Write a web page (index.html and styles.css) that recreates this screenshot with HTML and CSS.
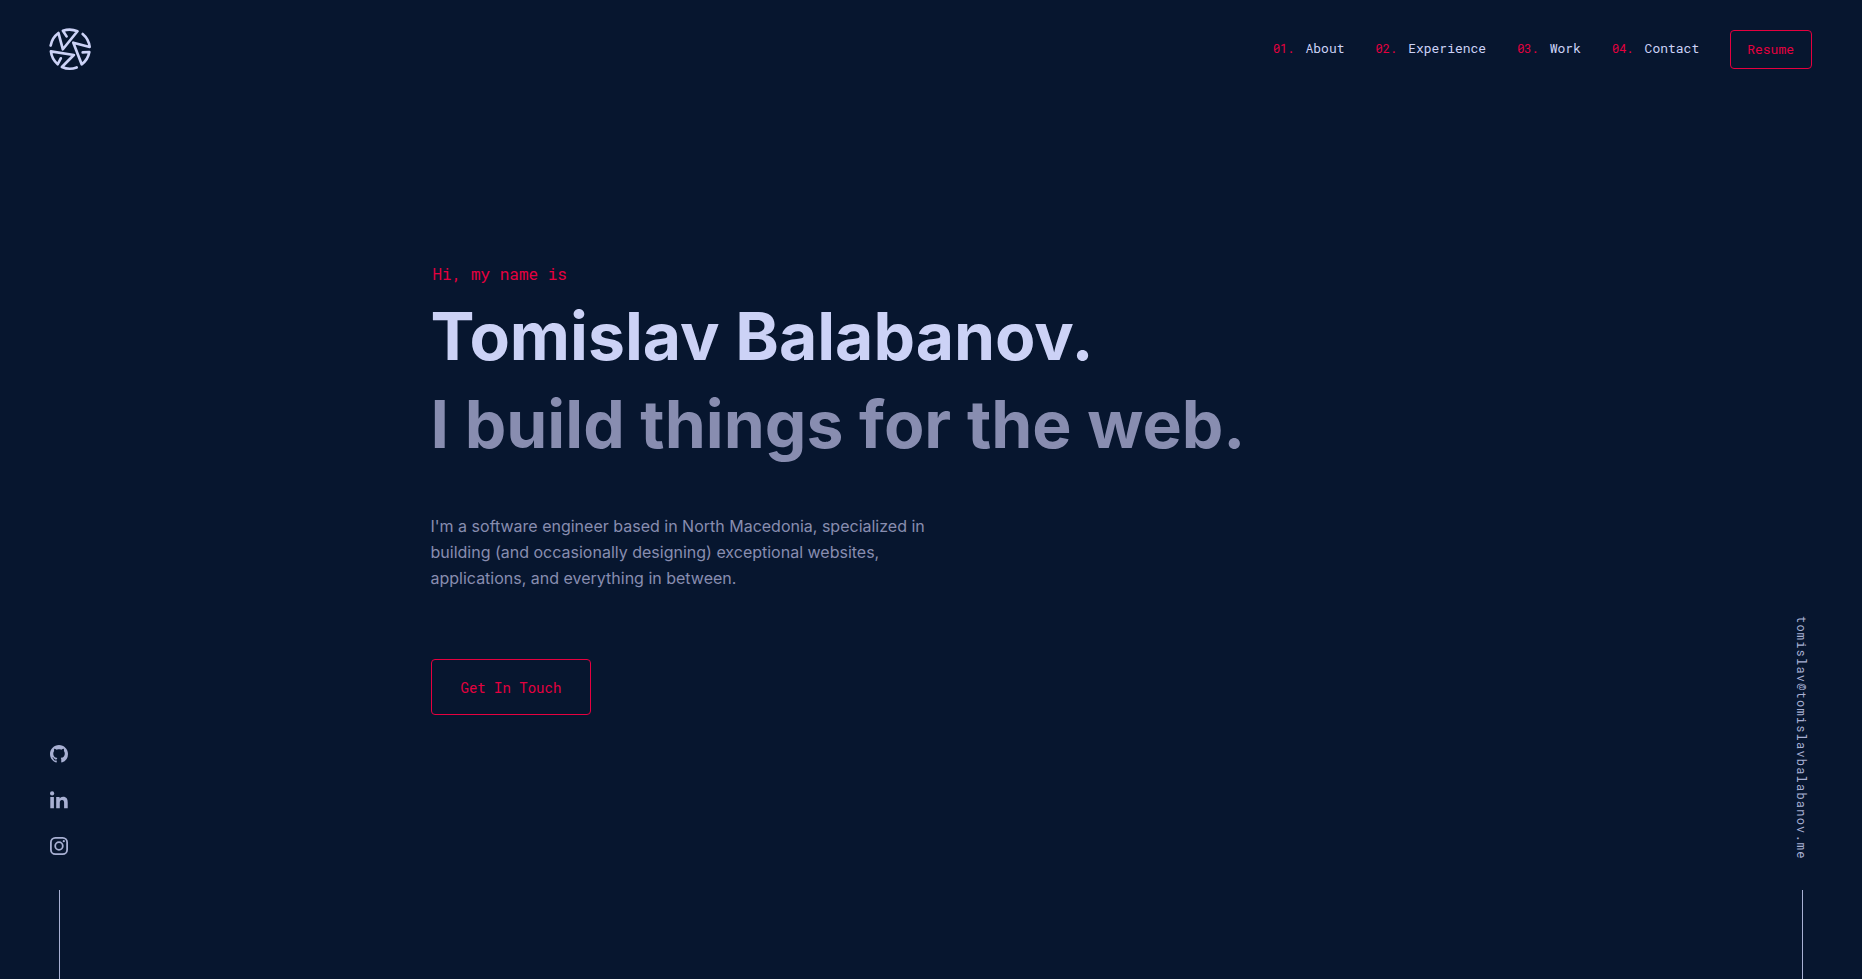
FILE: index.html
```html
<!DOCTYPE html>
<html lang="en">
<head>
<meta charset="utf-8">
<meta name="viewport" content="width=device-width, initial-scale=1">
<title>Tomislav Balabanov</title>
<link rel="stylesheet" href="styles.css">
</head>
<body>
<header class="site-header">
  <a class="logo" href="#" aria-label="Home">
    <svg viewBox="-66 -66 132 132" aria-hidden="true">
      <defs>
        <path id="blade" d="M38 -45A59 59 0 0 1 59 -6L10 -19L35 46A59 59 0 0 0 58 9L38 10"/>
      </defs>
      <use href="#blade"/>
      <use href="#blade" transform="rotate(120)"/>
      <use href="#blade" transform="rotate(240)"/>
    </svg>
  </a>
  <nav class="nav">
    <ol class="nav-list">
      <li><a class="nav-link" href="#about"><span class="nav-number">01.</span>About</a></li>
      <li><a class="nav-link" href="#experience"><span class="nav-number">02.</span>Experience</a></li>
      <li><a class="nav-link" href="#work"><span class="nav-number">03.</span>Work</a></li>
      <li><a class="nav-link" href="#contact"><span class="nav-number">04.</span>Contact</a></li>
    </ol>
    <a class="button button-small" href="#resume">Resume</a>
  </nav>
</header>
<div class="layout">
  <aside class="rail">
    <ul class="social">
      <li><a class="social-link" href="#github" aria-label="GitHub">
        <svg viewBox="0 0 16 16" aria-hidden="true"><path d="M8 0C3.58 0 0 3.58 0 8c0 3.54 2.29 6.53 5.47 7.59.4.07.55-.17.55-.38 0-.19-.01-.82-.01-1.49-2.01.37-2.53-.49-2.69-.94-.09-.23-.48-.94-.82-1.13-.28-.15-.68-.52-.01-.53.63-.01 1.08.58 1.23.82.72 1.21 1.87.87 2.33.66.07-.52.28-.87.51-1.07-1.78-.2-3.64-.89-3.64-3.95 0-.87.31-1.59.82-2.15-.08-.2-.36-1.02.08-2.12 0 0 .67-.21 2.2.82.64-.18 1.32-.27 2-.27s1.36.09 2 .27c1.53-1.04 2.2-.82 2.2-.82.44 1.1.16 1.92.08 2.12.51.56.82 1.27.82 2.15 0 3.07-1.87 3.75-3.65 3.95.29.25.54.73.54 1.48 0 1.07-.01 1.93-.01 2.2 0 .21.15.46.55.38A8.01 8.01 0 0 0 16 8c0-4.42-3.58-8-8-8z"/></svg>
      </a></li>
      <li><a class="social-link" href="#linkedin" aria-label="LinkedIn">
        <svg viewBox="0 0 18 18" aria-hidden="true"><circle cx="2.1" cy="2.4" r="2.1"/><path d="M.3 6h3.6v11.2H.3zM6.2 6h3.4v1.6C10.2 6.5 11.4 5.7 13 5.7c3.7 0 4.7 2.3 4.7 5.6v5.900h-3.600v-5.300c0-1.500-.2-3-2.100-3s-2.200 1.400-2.200 2.900v5.400H6.200z"/></svg>
      </a></li>
      <li><a class="social-link" href="#instagram" aria-label="Instagram">
        <svg viewBox="0 0 18 18" aria-hidden="true"><rect class="outline" x=".9" y=".9" width="16.200" height="16.200" rx="4.400"/><circle class="outline" cx="9" cy="9" r="3.800"/><circle cx="13.800" cy="4.200" r="1.100"/></svg>
      </a></li>
    </ul>
  </aside>
  <main class="hero">
    <p class="greeting">Hi, my name is</p>
    <h1 class="title">Tomislav Balabanov.</h1>
    <h2 class="title subtitle">I build things for the web.</h2>
    <p class="intro">I'm a software engineer based in North Macedonia, specialized in building (and occasionally designing) exceptional websites, applications, and everything in between.</p>
    <a class="button button-large" href="#contact">Get In Touch</a>
  </main>
  <aside class="rail">
    <a class="email" href="#email">tomislav@tomislavbalabanov.me</a>
  </aside>
</div>
</body>
</html>
```
FILE: styles.css
```css
:root {
  --background: #07162f;
  --light: #ccd2f6;
  --slate: #888db0;
  --rail: #a8b0d3;
  --accent: #e6003f;
  --mono: "Roboto Mono", "Liberation Mono", monospace;
  --sans: Inter, sans-serif;
}

* {
  box-sizing: border-box;
}

body {
  display: flex;
  flex-direction: column;
  min-height: 100vh;
  margin: 0;
  background: var(--background);
  color: var(--slate);
  font-family: var(--sans);
}

a {
  color: inherit;
  text-decoration: none;
}

ol,
ul {
  margin: 0;
  padding: 0;
  list-style: none;
}

.site-header {
  display: flex;
  align-items: center;
  justify-content: space-between;
  height: 98px;
  padding: 0 50px 0 48px;
}

.logo svg {
  display: block;
  width: 44px;
  height: 44px;
  fill: none;
  stroke: var(--light);
  stroke-width: 8;
  stroke-linecap: round;
  stroke-linejoin: round;
}

.nav,
.nav-list {
  display: flex;
  align-items: center;
  gap: 31px;
}

.nav-link {
  display: flex;
  align-items: baseline;
  gap: 11px;
  padding-bottom: 2px;
  color: var(--light);
  font: 13px/20px var(--mono);
}

.nav-number {
  color: var(--accent);
  font-size: 12px;
}

.button {
  display: inline-flex;
  align-items: center;
  border: 1px solid var(--accent);
  border-radius: 4px;
  color: var(--accent);
  font-family: var(--mono);
}

.button-small {
  height: 39px;
  padding: 0 17px 0 16px;
  font-size: 13px;
}

.button-large {
  height: 56px;
  padding: 0 29px;
  font-size: 14px;
}

.layout {
  display: grid;
  flex: 1;
  grid-template-columns: 40px minmax(0, 1000px) 40px;
  justify-content: space-between;
  padding: 0 40px 0 39px;
}

.rail {
  display: flex;
  flex-direction: column;
  align-items: center;
  justify-content: flex-end;
  color: var(--rail);
}

.rail::after {
  width: 1px;
  height: 89px;
  background: var(--rail);
  content: "";
}

.social {
  display: grid;
  gap: 28px;
  margin-bottom: 35px;
}

.social-link svg {
  display: block;
  width: 18px;
  height: 18px;
  fill: currentColor;
}

.social-link .outline {
  fill: none;
  stroke: currentColor;
  stroke-width: 1.8;
}

.email {
  margin-bottom: 30px;
  font: 12px/20px var(--mono);
  letter-spacing: 0.1em;
  writing-mode: vertical-rl;
}

.hero {
  display: flex;
  flex-direction: column;
  align-items: flex-start;
  justify-content: center;
  padding-bottom: 98px;
}

.greeting {
  margin: 0 0 8px 2px;
  color: var(--accent);
  font: 16px/20px var(--mono);
}

.title {
  margin: 0;
  color: var(--light);
  font-size: 66px;
  font-weight: 700;
  line-height: 88px;
}

.subtitle {
  color: var(--slate);
}

.intro {
  max-width: 510px;
  margin: 45px 0 68px;
  font-size: 16px;
  line-height: 26px;
}
```
